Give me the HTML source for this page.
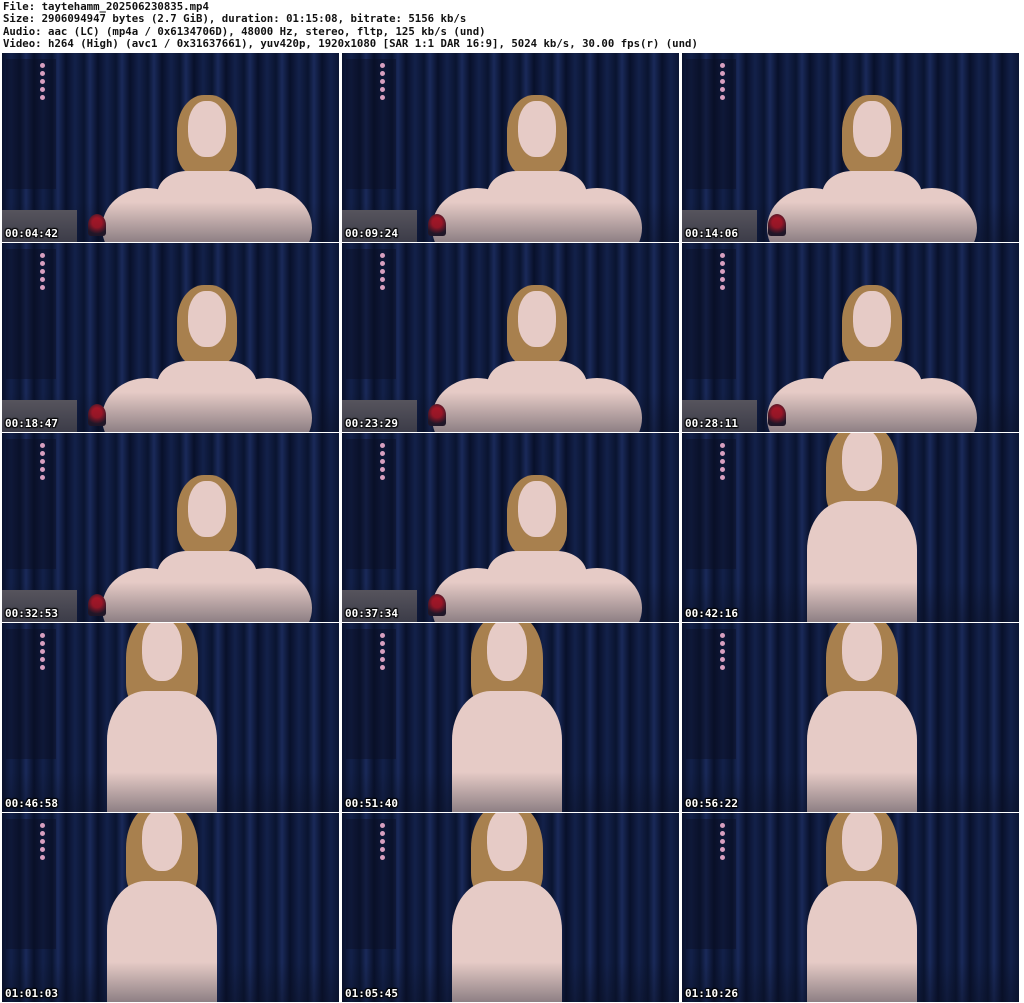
<!DOCTYPE html>
<html><head><meta charset="utf-8"><style>
*{margin:0;padding:0;box-sizing:border-box}
body{width:1024px;height:1003px;background:#fff;position:relative;overflow:hidden;font-family:"DejaVu Sans Mono","Liberation Mono",monospace}
.hdr{position:absolute;left:3px;top:1px;font-size:10.7px;line-height:12.3px;color:#111;font-weight:bold;white-space:pre}
.c{position:absolute;width:337px;height:189px;overflow:hidden;
background:repeating-linear-gradient(90deg,#08102a 0px,#13214a 9px,#0a1430 18px,#1a2a5a 24px,#08102a 32px)}
.c .sh{position:absolute;left:0;right:0;bottom:0;height:40px;background:linear-gradient(#0000,#0a0f22)}
.c .panel{position:absolute;left:4px;top:6px;width:50px;height:130px;background:#0a0f2577}
.c .panel i{position:absolute;left:34px;width:5px;height:5px;border-radius:50%;background:#d8a0c0}
.c .sofa{position:absolute;left:0;bottom:0;width:75px;height:32px;background:#5d5a62}
.c .lamp{position:absolute;left:86px;bottom:6px;width:18px;height:22px;border-radius:50% 50% 3px 3px;background:radial-gradient(circle at 50% 40%,#c01828 30%,#2a1a2a 70%)}
.c .hair{position:absolute;background:#a8804e;border-radius:45% 45% 30% 30%}
.c .sk{position:absolute;background:#e6cbc6;border-radius:45%}
.c .t{position:absolute;left:3px;bottom:2px;color:#fff;font:bold 11px "DejaVu Sans Mono",monospace;text-shadow:1px 1px 1px #000,-1px -1px 1px #000,1px -1px 1px #000,-1px 1px 1px #000}
</style></head><body>
<div class="hdr">File: taytehamm_202506230835.mp4
Size: 2906094947 bytes (2.7 GiB), duration: 01:15:08, bitrate: 5156 kb/s
Audio: aac (LC) (mp4a / 0x6134706D), 48000 Hz, stereo, fltp, 125 kb/s (und)
Video: h264 (High) (avc1 / 0x31637661), yuv420p, 1920x1080 [SAR 1:1 DAR 16:9], 5024 kb/s, 30.00 fps(r) (und)</div>
<div id="g"></div>
<script>
var times=["00:04:42","00:09:24","00:14:06","00:18:47","00:23:29","00:28:11","00:32:53","00:37:34","00:42:16","00:46:58","00:51:40","00:56:22","01:01:03","01:05:45","01:10:26"];
var xs=[2,342,682],h="";
for(var i=0;i<15;i++){var r=Math.floor(i/3),c=i%3,x=xs[c],y=53+r*190;
var fig="";
if(r<2||(r==2&&c<2)){var cx=c==1?195:(c==2?190:205);
fig='<div class="sk" style="left:'+(cx-105)+'px;top:135px;width:90px;height:80px;border-radius:50%"></div>'+
'<div class="sk" style="left:'+(cx+15)+'px;top:135px;width:90px;height:80px;border-radius:50%"></div>'+
'<div class="hair" style="left:'+(cx-30)+'px;top:42px;width:60px;height:80px"></div>'+
'<div class="sk" style="left:'+(cx-19)+'px;top:48px;width:38px;height:56px"></div>'+
'<div class="sk" style="left:'+(cx-50)+'px;top:118px;width:100px;height:80px;border-radius:30% 30% 10% 10%"></div>'+
'<div class="sofa"></div><div class="lamp"></div>';}
else{var cx=c==2?180:(c==1?165:160);
fig='<div class="hair" style="left:'+(cx-36)+'px;top:-10px;width:72px;height:100px"></div>'+
'<div class="sk" style="left:'+(cx-20)+'px;top:-4px;width:40px;height:62px"></div>'+
'<div class="sk" style="left:'+(cx-55)+'px;top:68px;width:110px;height:140px;border-radius:35% 35% 10% 10%"></div>';}
var dots="";for(var k=0;k<5;k++)dots+='<i style="top:'+(4+k*8)+'px"></i>';
h+='<div class="c" style="left:'+x+'px;top:'+y+'px"><div class="panel">'+dots+'</div>'+fig+'<div class="sh" style="opacity:.4"></div><div class="t">'+times[i]+'</div></div>';}
document.getElementById('g').innerHTML=h;
</script>
</body></html>
